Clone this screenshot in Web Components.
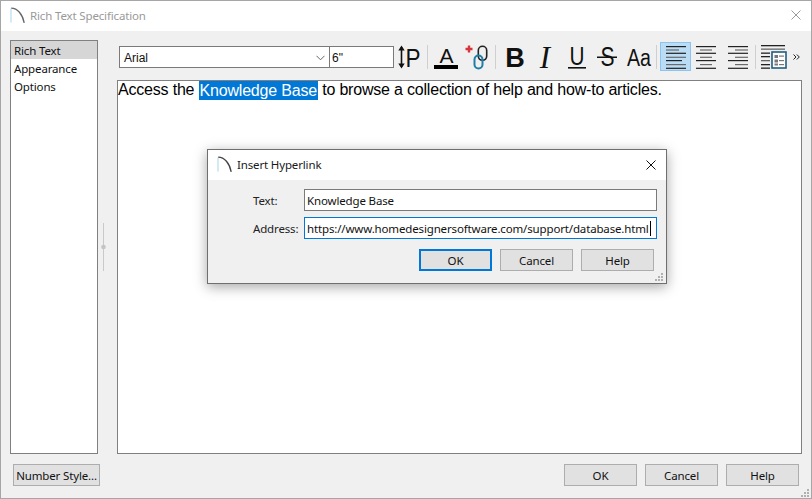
<!DOCTYPE html>
<html><head><meta charset="utf-8">
<style>
html,body{margin:0;padding:0;background:#f0f0f0}
body{font:11.5px "Noto Sans","Open Sans",sans-serif;letter-spacing:-.15px;color:#000;width:812px;height:499px;overflow:hidden}
</style></head><body>
<template id="arc"><svg width="16" height="17" viewBox="0 0 16 17" style="display:block"><path d="M1 1.5V15.5" stroke="#b5dcf2" stroke-width="1.2" fill="none"/><path d="M1.2 1.2C7.5 1.2 12.5 7 14.2 15.8" stroke="var(--arc,#444)" stroke-width="1.3" fill="none"/></svg></template>
<rt-window>
  <rt-title slot="title" faded>Rich Text Specification</rt-title>
  <rt-side slot="side">
    <rt-item selected>Rich Text</rt-item><rt-item>Appearance</rt-item><rt-item>Options</rt-item>
  </rt-side>
  <rt-toolbar slot="toolbar"></rt-toolbar>
  <rt-editor slot="editor"></rt-editor>
  <rt-btn slot="left" w="87">Number Style...</rt-btn>
  <rt-btn slot="right">OK</rt-btn><rt-btn slot="right">Cancel</rt-btn><rt-btn slot="right">Help</rt-btn>
  <rt-dialog slot="overlay"></rt-dialog>
</rt-window>
<script>
const UI='11.5px "Noto Sans",sans-serif;letter-spacing:-.15px';
const el=(c,tpl)=>{const s=c.attachShadow({mode:'open'});s.innerHTML=tpl;return s};
const grip=`<svg width="9" height="9" viewBox="0 0 9 9" style="display:block"><g fill="#b0b0b0"><rect x="7" y="1" width="2" height="2"/><rect x="4" y="4" width="2" height="2"/><rect x="7" y="4" width="2" height="2"/><rect x="1" y="7" width="2" height="2"/><rect x="4" y="7" width="2" height="2"/><rect x="7" y="7" width="2" height="2"/></g></svg>`;
customElements.define('rt-title',class extends HTMLElement{connectedCallback(){
 const f=this.hasAttribute('faded');
 const s=el(this,`<style>:host{display:flex;align-items:center;height:var(--h,30px);background:#fff;color:${f?'#9a9a9a':'#1a1a1a'};--arc:${f?'#666':'#444'};font:${UI};padding:0 10px var(--pb,2px) var(--pl,9px);box-sizing:border-box}
 .a{width:16px;height:17px;margin-right:var(--mr,4px);flex:none}.t{flex:1}svg.x{display:block;flex:none}</style>
 <div class="a"></div><div class="t"><slot></slot></div>
 <svg class="x" width="10" height="10" viewBox="0 0 10 10"><path d="M.5.5l9 9M9.500.5l-9 9" stroke="${f?'#999':'#111'}" fill="none"/></svg>`);
 s.querySelector('.a').append(document.getElementById('arc').content.cloneNode(true));
}});
customElements.define('rt-item',class extends HTMLElement{connectedCallback(){
 el(this,`<style>:host{display:block;height:18px;padding-left:3px;font:${UI};line-height:20px;color:#111;background:${this.hasAttribute('selected')?'#d6d6d6':'transparent'}}</style><slot></slot>`);
}});
customElements.define('rt-side',class extends HTMLElement{connectedCallback(){
 el(this,`<style>:host{display:block;width:88px;box-sizing:border-box;border:1px solid #808080;background:#fff}</style><slot></slot>`);
}});
customElements.define('rt-btn',class extends HTMLElement{connectedCallback(){
 const p=this.hasAttribute('primary');
 el(this,`<style>:host{display:flex;align-items:center;justify-content:center;box-sizing:border-box;width:${this.getAttribute('w')||73}px;height:22px;background:#e1e1e1;border:${p?'2px solid #0078d7':'1px solid #adadad'};font:${UI};color:#111;white-space:nowrap}</style><slot></slot>`);
}});
customElements.define('rt-field',class extends HTMLElement{connectedCallback(){
 const f=this.hasAttribute('focus');
 el(this,`<style>:host{display:flex;align-items:center;box-sizing:border-box;min-width:0;height:22px;background:#fff;border:1px solid ${f?'#0078d7':'#7a7a7a'};padding-left:2px;font:${UI};color:#111;white-space:nowrap;overflow:hidden}
 .c{display:${f?'block':'none'};width:1px;height:15px;background:#000;margin-left:1px;flex:none}</style><span><slot></slot></span><div class="c"></div>`);
}});
customElements.define('rt-combo',class extends HTMLElement{connectedCallback(){
 el(this,`<style>:host{display:flex;align-items:center;justify-content:space-between;box-sizing:border-box;width:${this.getAttribute('w')}px;height:22px;margin-top:4px;background:#fff;border:1px solid #7a7a7a;padding:1px 4px 0 ${this.getAttribute('pl')||4}px;font:12px "Liberation Sans",sans-serif;letter-spacing:0;color:#111;flex:none}
 svg{display:block;flex:none}</style><slot></slot>${this.hasAttribute('arrow')?'<svg width="9" height="6" viewBox="0 0 9 6"><path d="M.5.8l4 4 4-4" stroke="#666" fill="none"/></svg>':''}`);
}});
customElements.define('rt-tool',class extends HTMLElement{connectedCallback(){
 const on=this.hasAttribute('on');
 el(this,`<style>:host{display:flex;align-items:center;justify-content:center;flex:none;box-sizing:border-box;width:${this.getAttribute('w')}px;height:29px;${on?'background:#bbdcf5;border:1px solid #8cc4ef;':''}}svg{display:block;overflow:visible}text{font-family:"Liberation Sans",sans-serif;letter-spacing:0}</style>${this.getAttribute('svg')||''}<slot></slot>`);
}});
const lines=(rows)=>{let o='<svg width="22" height="24" viewBox="0 0 22 24">';rows.forEach(([x,w,y,c])=>{o+=`<rect x="${x}" y="${y}" width="${w}" height="1.2" fill="${c}"/>`});return o+'</svg>'};
const ys=[1,4.4,7.7,11.7,15,19,22.7];
const D='#222',G='#6a6a6a';
const icons={
 p:`<svg width="24" height="24" viewBox="0 0 24 24"><path d="M5.500 2V22" stroke="#111" stroke-width="1.6"/><path d="M2.300 5.500L5.500 .5l3.200 5zM2.300 18.500L5.500 23.500l3.200-5z" fill="#111"/><text x="9.500" y="21.500" font-size="26" fill="#111" textLength="15" lengthAdjust="spacingAndGlyphs">P</text></svg>`,
 a:`<svg width="24" height="24" viewBox="0 0 24 24"><text x="12.500" y="17.500" font-size="21" text-anchor="middle" fill="#111">A</text><rect y="20" width="24" height="4" fill="#000"/></svg>`,
 link:`<svg width="24" height="26" viewBox="0 0 24 26"><path d="M4 1.500v7M.5 5h7" stroke="#d8333a" stroke-width="2.4"/><rect x="13.300" y="2.300" width="8.400" height="14" rx="4.200" fill="none" stroke="#222" stroke-width="1.600"/><rect x="9.500" y="11.500" width="8" height="13" rx="4" fill="none" stroke="#1f7fa8" stroke-width="2"/></svg>`,
 b:`<svg width="20" height="24" viewBox="0 0 20 24"><text x="10" y="22" font-size="27" font-weight="700" text-anchor="middle" fill="#111">B</text></svg>`,
 i:`<svg width="18" height="24" viewBox="0 0 18 24"><text x="9" y="22.500" font-size="31" font-style="italic" text-anchor="middle" fill="#111" style="font-family:'Liberation Serif'">I</text></svg>`,
 u:`<svg width="20" height="25" viewBox="0 0 20 25"><text x="10" y="21" font-size="26" text-anchor="middle" fill="#111" textLength="15" lengthAdjust="spacingAndGlyphs">U</text><rect x="1" y="23" width="18" height="1.600" fill="#111"/></svg>`,
 s:`<svg width="20" height="25" viewBox="0 0 20 25"><text x="10.500" y="22" font-size="27" text-anchor="middle" fill="#111" textLength="14" lengthAdjust="spacingAndGlyphs">S</text><rect y="12.500" width="20" height="1.500" fill="#111"/></svg>`,
 aa:`<svg width="26" height="24" viewBox="0 0 26 24"><text x="13" y="20.500" font-size="23" text-anchor="middle" fill="#111" textLength="24" lengthAdjust="spacingAndGlyphs">Aa</text></svg>`,
 left:lines(ys.map((y,i)=>[1,[20,13,20,20,16,20,20][i],y,i%2?G:D])),
 center:lines(ys.map((y,i)=>[i%2?5:1,i%2?12:20,y,i%2?G:D])),
 right:lines(ys.map((y,i)=>[i%2?8:1,i%2?13:20,y,i%2?G:D])),
 table:`<svg width="26" height="24" viewBox="0 0 26 24"><g fill="#222"><rect width="24" height="1.300" y="0"/><rect width="24" height="1.300" y="3.500" fill="#666"/><rect width="9" height="1.300" y="7.500"/><rect width="9" height="1.300" y="11"/><rect width="9" height="1.300" y="15" fill="#666"/><rect width="9" height="1.300" y="19"/><rect width="9" height="1.300" y="22.500"/></g><rect x="11" y="7" width="14" height="16" fill="#fff" stroke="#1d5f80" stroke-width="1.600"/><g fill="#777"><rect x="13.500" y="10" width="3.500" height="3"/><rect x="13.500" y="14.500" width="3.500" height="3"/><rect x="13.500" y="18.500" width="3.500" height="2"/><rect x="18" y="10.500" width="5" height="1.200"/><rect x="18" y="15" width="5" height="1.200"/><rect x="18" y="19" width="5" height="1.200"/></g></svg>`,
 sep:`<svg width="1" height="24" viewBox="0 0 1 24"><rect width="1" height="24" fill="#cfcfcf"/></svg>`,
 more:`<svg width="7" height="6" viewBox="0 0 7 6"><path d="M.5.500L3 3 .5 5.500M3.800.500L6.300 3 3.800 5.500" stroke="#222" fill="none"/></svg>`
};
customElements.define('rt-toolbar',class extends HTMLElement{connectedCallback(){
 const s=el(this,`<style>:host{display:flex;align-items:flex-start;box-sizing:border-box;height:40px;padding:2px 0 0 2px;flex:none}</style>
 <rt-combo w="211" arrow>Arial</rt-combo><rt-combo w="65" pl="2" style="margin-left:-1px">6"</rt-combo><div id="t" style="display:flex;align-items:center"></div>`);
 const t=s.getElementById('t');
 [['p',28],['sep',11],['a',26],['link',35],['sep',3],['b',35],['i',25],['u',40],['s',20],['aa',26,0,9],['sep',8],['left',31,1],['center',30],['right',34],['sep',1],['table',36],['more',8]].forEach(([k,w,on,ml])=>{
  const e=document.createElement('rt-tool');e.setAttribute('w',w);e.setAttribute('svg',icons[k]);if(on)e.setAttribute('on','');if(ml)e.style.marginLeft=ml+'px';t.append(e);
 });
}});
customElements.define('rt-editor',class extends HTMLElement{connectedCallback(){
 el(this,`<style>:host{display:block;flex:1;box-sizing:border-box;border:1px solid #808080;background:#fff;font:16px/18px "Liberation Sans",Arial,sans-serif;letter-spacing:-.195px;color:#000;white-space:nowrap}
 mark{background:#0078d7;color:#fff;display:inline-block;padding:0 1px;line-height:19px;vertical-align:top}</style>Access the <mark>Knowledge Base</mark> to browse a collection of help and how-to articles.`);
}});
customElements.define('rt-dialog',class extends HTMLElement{connectedCallback(){
 el(this,`<style>:host{position:absolute;left:206px;top:148px;width:460px;height:135px;box-sizing:border-box;border:1px solid #6f6f6f;background:#f0f0f0;box-shadow:0 3px 12px rgba(0,0,0,.35);display:flex;flex-direction:column;font:${UI};color:#111}
 rt-title{--h:30px;--pl:9px;--mr:4px;--pb:1px}
 .form{display:grid;grid-template-columns:90px 353px;column-gap:6px;row-gap:6px;padding:9px 0 0 0;align-items:center;flex:none}
 .form label{padding-left:45px;color:#222}
 .btns{display:flex;justify-content:flex-end;gap:8px;padding:10px 12px 0 0}
 .g{position:absolute;right:3px;bottom:2px}</style>
 <rt-title>Insert Hyperlink</rt-title>
 <div class="form">
  <label>Text:</label><rt-field>Knowledge Base</rt-field>
  <label>Address:</label><rt-field focus>https://www.homedesignersoftware.com/support/database.html</rt-field>
 </div>
 <div class="btns"><rt-btn primary>OK</rt-btn><rt-btn>Cancel</rt-btn><rt-btn>Help</rt-btn></div>
 <div class="g">${grip}</div>`);
}});
customElements.define('rt-window',class extends HTMLElement{connectedCallback(){
 el(this,`<style>:host{display:flex;flex-direction:column;position:relative;width:812px;height:499px;box-sizing:border-box;border:1px solid #a6a6a6;background:#f0f0f0}
 .body{flex:1;display:flex;padding:9px 9px 0 9px;min-height:0}
 .split{width:19px;flex:none;display:flex;align-items:center;padding:0 0 1px 3px;box-sizing:border-box}
 .main{flex:1;display:flex;flex-direction:column;min-width:0}
 .foot{display:flex;justify-content:space-between;align-items:flex-start;padding:10px 12px 12px 12px;height:44px;box-sizing:border-box;flex:none}
 .r{display:flex;gap:8px}
 .g{position:absolute;right:2px;bottom:1px}
 ::slotted(rt-side){flex:none}</style>
 <slot name="title"></slot>
 <div class="body"><slot name="side"></slot>
  <div class="split"><svg width="5" height="48" viewBox="0 0 5 48" style="display:block"><rect x="2" width="1" height="48" fill="#c9c9c9"/><circle cx="2.500" cy="24" r="2.300" fill="#c4c4c4"/></svg></div>
  <div class="main"><slot name="toolbar"></slot><slot name="editor"></slot></div></div>
 <div class="foot"><slot name="left"></slot><div class="r"><slot name="right"></slot></div></div>
 <div class="g">${grip}</div>
 <slot name="overlay"></slot>`);
}});
</script>
</body></html>
